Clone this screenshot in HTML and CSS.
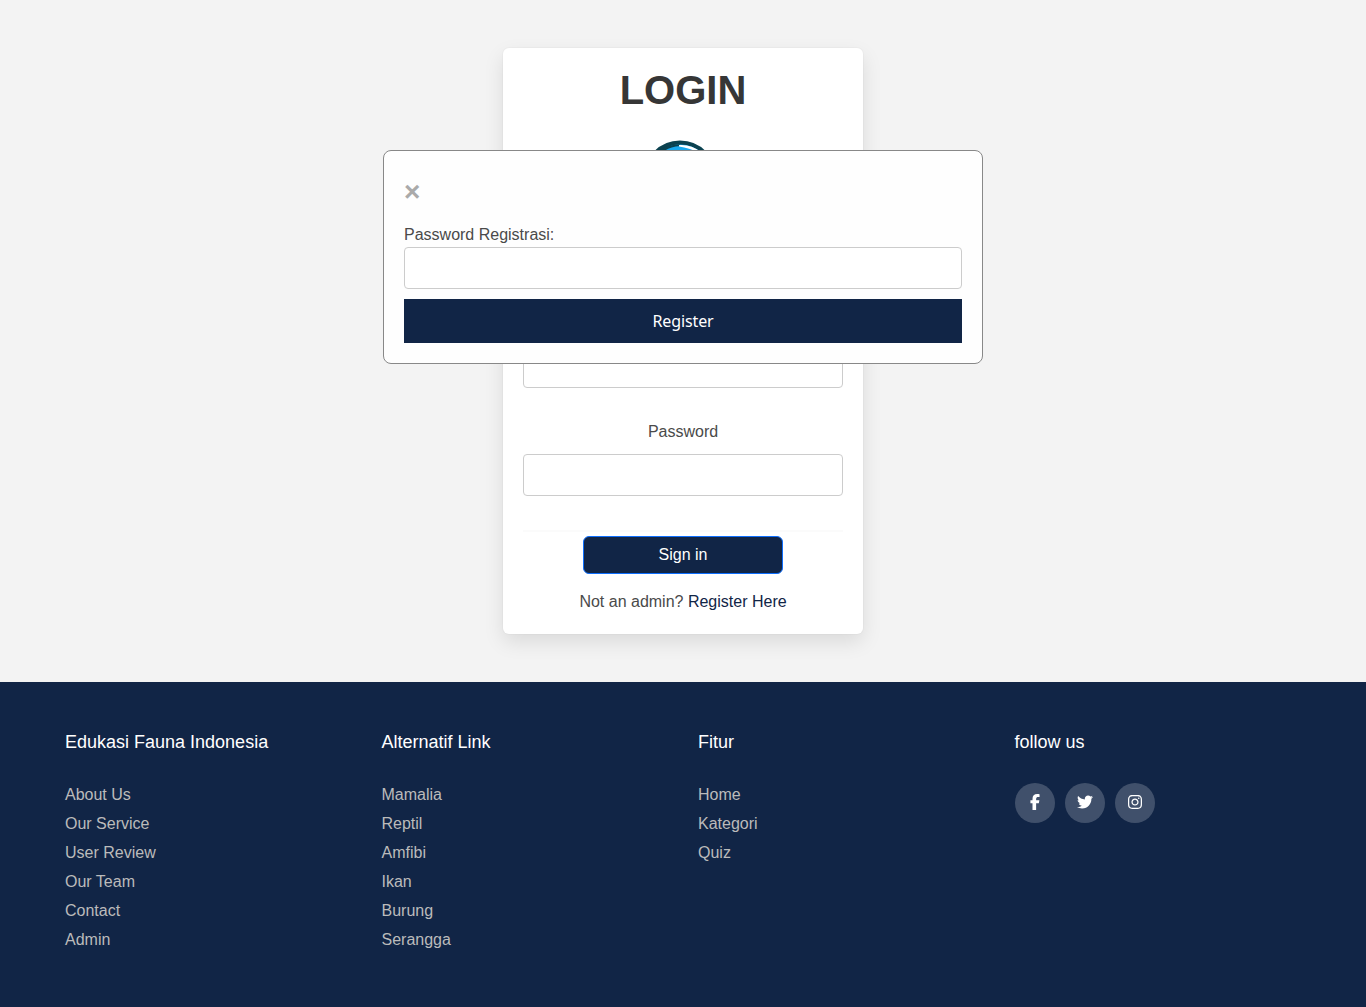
FILE: index.html
```html
<!DOCTYPE html>
<html lang="id">
<head>
<meta charset="utf-8">
<title>Login</title>
<link rel="stylesheet" href="styles.css">
</head>
<body>
<main class="page">
  <section class="card">
    <h1 class="title">LOGIN</h1>
    <svg class="logo" viewBox="0 0 100 100" aria-hidden="true">
      <circle cx="50" cy="37" r="34.500" fill="#19a9ef" stroke="#0b4250" stroke-width="4"/>
      <path d="M28 11Q38 4 50 4.500L50 6Q41 6.500 35 10.500Z" fill="#0b4250"/>
      <path d="M49 5Q61 4 71 12L67 12Q60 8 49 6.500Z" fill="#fff"/>
    </svg>
    <form class="login-form">
      <label class="label" for="user">Username</label>
      <input class="input" id="user" type="text">
      <label class="label label-password" for="pass">Password</label>
      <input class="input" id="pass" type="password">
      <div class="divider"></div>
      <button class="sign-in" type="button">Sign in</button>
    </form>
    <p class="note">Not an admin? <a class="note-link" href="#">Register Here</a></p>
  </section>
</main>
<footer class="footer">
  <div class="column">
    <h4 class="heading">Edukasi Fauna Indonesia</h4>
    <ul class="links"><li>About Us</li><li>Our Service</li><li>User Review</li><li>Our Team</li><li>Contact</li><li>Admin</li></ul>
  </div>
  <div class="column">
    <h4 class="heading">Alternatif Link</h4>
    <ul class="links"><li>Mamalia</li><li>Reptil</li><li>Amfibi</li><li>Ikan</li><li>Burung</li><li>Serangga</li></ul>
  </div>
  <div class="column">
    <h4 class="heading">Fitur</h4>
    <ul class="links"><li>Home</li><li>Kategori</li><li>Quiz</li></ul>
  </div>
  <div class="column">
    <h4 class="heading">follow us</h4>
    <div class="social">
      <a class="circle" href="#" aria-label="Facebook"><svg class="icon" width="10" height="16" viewBox="0 0 320 512"><path d="M80 299.300V512H196V299.300h86.500l18-97.800H196V166.900c0-51.700 20.300-71.500 72.700-71.500c16.300 0 29.400 .4 37 1.200V7.900C291.400 4 256.400 0 236.200 0C129.300 0 80 50.500 80 159.400v42.100H14v97.800H80z"/></svg></a>
      <a class="circle" href="#" aria-label="Twitter"><svg class="icon" width="16" height="16" viewBox="0 0 512 512"><path d="M459.37 151.716c.325 4.548.325 9.097.325 13.645 0 138.72-105.583 298.558-298.558 298.558-59.452 0-114.68-17.219-161.137-47.106 8.447.974 16.568 1.299 25.34 1.299 49.055 0 94.213-16.568 130.274-44.832-46.132-.975-84.792-31.188-98.112-72.772 6.498.974 12.995 1.624 19.818 1.624 9.421 0 18.843-1.3 27.614-3.573-48.081-9.747-84.143-51.98-84.143-102.985v-1.299c13.969 7.797 30.214 12.67 47.431 13.319-28.264-18.843-46.781-51.005-46.781-87.391 0-19.492 5.197-37.36 14.294-52.954 51.655 63.675 129.3 105.258 216.365 109.807-1.624-7.797-2.599-15.918-2.599-24.04 0-57.828 46.782-104.934 104.934-104.934 30.213 0 57.502 12.67 76.67 33.137 23.715-4.548 46.456-13.32 66.599-25.34-7.798 24.366-24.366 44.833-46.132 57.827 21.117-2.273 41.584-8.122 60.426-16.243-14.292 20.791-32.161 39.308-52.628 54.253z"/></svg></a>
      <a class="circle" href="#" aria-label="Instagram"><svg class="icon" width="14" height="16" viewBox="0 0 448 512"><path d="M224.1 141c-63.6 0-114.9 51.3-114.9 114.9s51.3 114.9 114.9 114.9S339 319.500 339 255.900 287.700 141 224.100 141zm0 189.600c-41.100 0-74.700-33.500-74.700-74.700s33.500-74.700 74.700-74.700 74.700 33.500 74.700 74.700-33.600 74.700-74.700 74.700zm146.400-194.300c0 14.900-12 26.800-26.800 26.800-14.900 0-26.800-12-26.800-26.800s12-26.800 26.800-26.800 26.800 12 26.800 26.800zm76.100 27.200c-1.700-35.900-9.900-67.700-36.200-93.900-26.200-26.200-58-34.400-93.900-36.200-37-2.100-147.900-2.100-184.900 0-35.800 1.700-67.600 9.900-93.900 36.100s-34.400 58-36.200 93.900c-2.100 37-2.100 147.900 0 184.900 1.700 35.900 9.900 67.700 36.200 93.900s58 34.400 93.900 36.200c37 2.100 147.900 2.100 184.900 0 35.900-1.700 67.700-9.900 93.900-36.200 26.200-26.200 34.400-58 36.200-93.900 2.100-37 2.100-147.800 0-184.800zM398.800 388c-7.800 19.600-22.900 34.700-42.600 42.600-29.500 11.700-99.500 9-132.100 9s-102.700 2.600-132.100-9c-19.600-7.800-34.700-22.900-42.600-42.600-11.700-29.500-9-99.500-9-132.100s-2.600-102.700 9-132.100c7.800-19.600 22.900-34.700 42.600-42.600 29.500-11.700 99.500-9 132.100-9s102.700-2.600 132.100 9c19.600 7.800 34.700 22.900 42.600 42.600 11.700 29.500 9 99.500 9 132.100s2.700 102.700-9 132.100z"/></svg></a>
    </div>
  </div>
</footer>
<div class="modal" role="dialog">
  <span class="close">×</span>
  <label class="modal-label" for="reg">Password Registrasi:</label>
  <input class="input" id="reg" type="password">
  <button class="register" type="button">Register</button>
</div>
</body>
</html>
```
FILE: styles.css
```css
* { box-sizing: border-box; }
body {
  margin: 0;
  background: #f3f3f3;
  color: #4a4a4a;
  font: 16px/24px "Liberation Sans", Arial, sans-serif;
}
.page { display: flex; justify-content: center; padding: 48px 0; }
.card {
  width: 360px;
  height: 586px;
  padding: 18px 20px 20px;
  display: flex;
  flex-direction: column;
  background: #fff;
  border-radius: 6px;
  box-shadow: 0 8px 20px rgba(10, 10, 10, .1), 0 0 0 1px rgba(10, 10, 10, .02);
  text-align: center;
}
.title { margin: 0; font-size: 40px; line-height: 48px; color: #363636; }
.logo { width: 100px; height: 100px; margin: 26px auto 0 107px; }
.login-form { display: flex; flex-direction: column; margin-top: 90px; }
.label { display: none; }
.label-password { display: block; margin: 32px 0 10px; }
.input {
  width: 100%;
  height: 42px;
  padding: 10px;
  display: block;
  border: 1px solid #ccc;
  border-radius: 4px;
  background: #fff;
  font: inherit;
}
.login-form > #user { margin-top: 16px; }
.divider { height: 2px; margin: 34px 0 4px; background: #fbfbfb; }
.sign-in {
  width: 200px;
  height: 38px;
  margin: 0 auto;
  padding: 0;
  border: 1px solid #0d6efd;
  border-radius: 6px;
  background: #112546;
  color: #fff;
  font: inherit;
}
.note { margin: 16px 0 0; }
.note-link { color: #112546; text-decoration: none; }
.footer {
  height: 325px;
  padding: 48px 50px 0 65px;
  display: grid;
  grid-template-columns: repeat(3, 316.5px) 1fr;
  background: #112546;
}
.heading { margin: 0 0 29px; font-size: 18px; font-weight: 400; line-height: 24px; color: #fff; }
.links { margin: 0; padding: 0; display: grid; gap: 5px; list-style: none; color: #bbb; }
.social { display: flex; gap: 10px; }
.circle {
  width: 40px;
  height: 40px;
  padding-bottom: 2px;
  display: flex;
  align-items: center;
  justify-content: center;
  border-radius: 50%;
  background: rgba(255, 255, 255, .2);
}
.icon { fill: #fff; }
.modal {
  position: absolute;
  top: 150px;
  left: 50%;
  width: 600px;
  height: 214px;
  margin-left: -300px;
  padding: 20px;
  display: flex;
  flex-direction: column;
  background: #fefefe;
  border: 1px solid #888;
  border-radius: 8px;
}
.close { color: #aaa; font-size: 28px; font-weight: 700; line-height: 42px; }
.modal-label { margin: 10px 0 0; }
.register {
  height: 44px;
  margin-top: 10px;
  padding: 0;
  border: 0;
  background: #112546;
  color: #fff;
  font: 16px/24px "Noto Sans", sans-serif;
  letter-spacing: -.1px;
}
```
